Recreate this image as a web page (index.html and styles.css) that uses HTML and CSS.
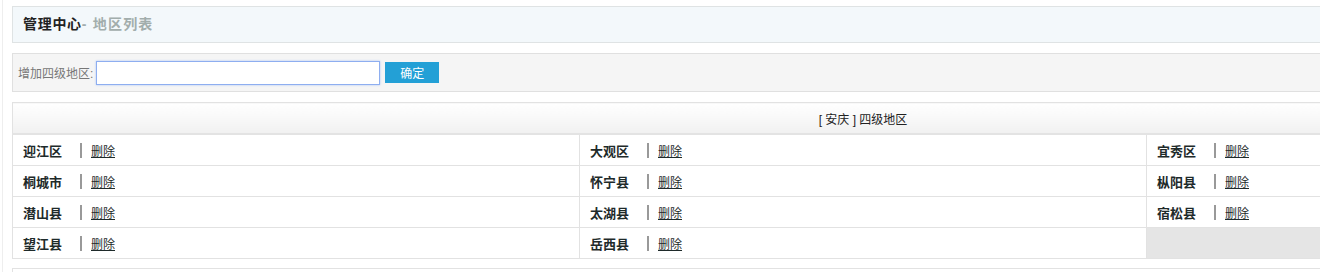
FILE: index.html
```html
<!DOCTYPE html>
<html lang="zh-CN">
<head>
    <meta charset="UTF-8">
    <title>管理中心 - 地区列表</title>
    <link rel="stylesheet" href="styles.css">
</head>
<body>
    <div class="frame">
        <div class="main">
            <div class="title-box">
                <span class="title">管理中心</span><span class="subtitle">- 地区列表</span>
            </div>

            <form class="add-box">
                <label for="areaName">增加四级地区:</label>
                <input type="text" id="areaName" name="areaName">
                <button type="submit">确定</button>
            </form>

            <table class="area-table">
                <thead>
                    <tr>
                        <th colspan="3">[ 安庆 ] 四级地区</th>
                    </tr>
                </thead>
                <tbody>
                    <tr>
                        <td><span class="name">迎江区</span><span class="sep"></span><a href="#">删除</a></td>
                        <td><span class="name">大观区</span><span class="sep"></span><a href="#">删除</a></td>
                        <td><span class="name">宜秀区</span><span class="sep"></span><a href="#">删除</a></td>
                    </tr>
                    <tr>
                        <td><span class="name">桐城市</span><span class="sep"></span><a href="#">删除</a></td>
                        <td><span class="name">怀宁县</span><span class="sep"></span><a href="#">删除</a></td>
                        <td><span class="name">枞阳县</span><span class="sep"></span><a href="#">删除</a></td>
                    </tr>
                    <tr>
                        <td><span class="name">潜山县</span><span class="sep"></span><a href="#">删除</a></td>
                        <td><span class="name">太湖县</span><span class="sep"></span><a href="#">删除</a></td>
                        <td><span class="name">宿松县</span><span class="sep"></span><a href="#">删除</a></td>
                    </tr>
                    <tr>
                        <td><span class="name">望江县</span><span class="sep"></span><a href="#">删除</a></td>
                        <td><span class="name">岳西县</span><span class="sep"></span><a href="#">删除</a></td>
                        <td class="empty"></td>
                    </tr>
                </tbody>
            </table>

            <div class="next-box"></div>
        </div>
    </div>
</body>
</html>
```

FILE: styles.css
```css
html, body {
    margin: 0;
    padding: 0;
    overflow: hidden;
    background-color: #fff;
    font-family: "Liberation Sans", "Noto Sans CJK SC", sans-serif;
    font-size: 12px;
    color: #333;
}
.frame {
    margin-left: 2px;
    border-left: 1px solid #eeeeee;
    padding: 6px 0 0 9px;
    height: 266px;
}
.main {
    width: 1702px;
}
.title-box {
    height: 35px;
    line-height: 35px;
    padding-left: 10px;
    border: 1px solid #dfe3e4;
    background-color: #f3f8fb;
}
.title {
    font-size: 14px;
    font-weight: bold;
    letter-spacing: 0.7px;
    color: #222;
}
.subtitle {
    font-size: 14px;
    font-weight: bold;
    letter-spacing: 1.2px;
    color: #a2adac;
}
.add-box {
    display: flex;
    align-items: center;
    margin: 10px 0 0 0;
    height: 37px;
    padding: 0 5px;
    border: 1px solid #e0e0e0;
    background-color: #f5f5f5;
}
.add-box label {
    color: #777;
    margin-right: 3px;
}
.add-box input {
    width: 280px;
    height: 20px;
    padding: 1px;
    margin: 0;
    border: 1px solid #8eaef0;
    box-shadow: 0 0 2px #aac4f6;
    background-color: #fff;
    outline: none;
}
.add-box button {
    width: 54px;
    height: 21px;
    margin-left: 5px;
    padding: 0;
    border: none;
    background-color: #23a0d6;
    color: #fff;
    font-family: inherit;
    font-size: 12px;
    cursor: pointer;
}
.area-table {
    margin-top: 10px;
    width: 100%;
    table-layout: fixed;
    border-collapse: collapse;
    border: 1px solid #e2e2e2;
}
.area-table th {
    height: 30px;
    padding: 0;
    font-weight: normal;
    text-align: center;
    color: #222;
    background: linear-gradient(#ffffff, #f1f1f1);
    border-bottom: 2px solid #e3e3e3;
}
.area-table td {
    height: 30px;
    padding: 0 0 0 10px;
    border: 1px solid #e2e2e2;
    white-space: nowrap;
}
.area-table td.empty {
    background-color: #e5e5e5;
}
.name {
    display: inline-block;
    width: 57px;
    font-size: 13px;
    font-weight: bold;
    color: #1e2a2a;
    vertical-align: middle;
}
.sep {
    display: inline-block;
    width: 2px;
    height: 15px;
    background-color: #999;
    vertical-align: middle;
    margin-right: 9px;
}
.area-table a {
    color: #1e2a2a;
    text-decoration: underline;
    vertical-align: middle;
}
.next-box {
    margin-top: 9px;
    height: 3px;
    border-top: 1px solid #e2e2e2;
    border-left: 1px solid #e2e2e2;
}
```
